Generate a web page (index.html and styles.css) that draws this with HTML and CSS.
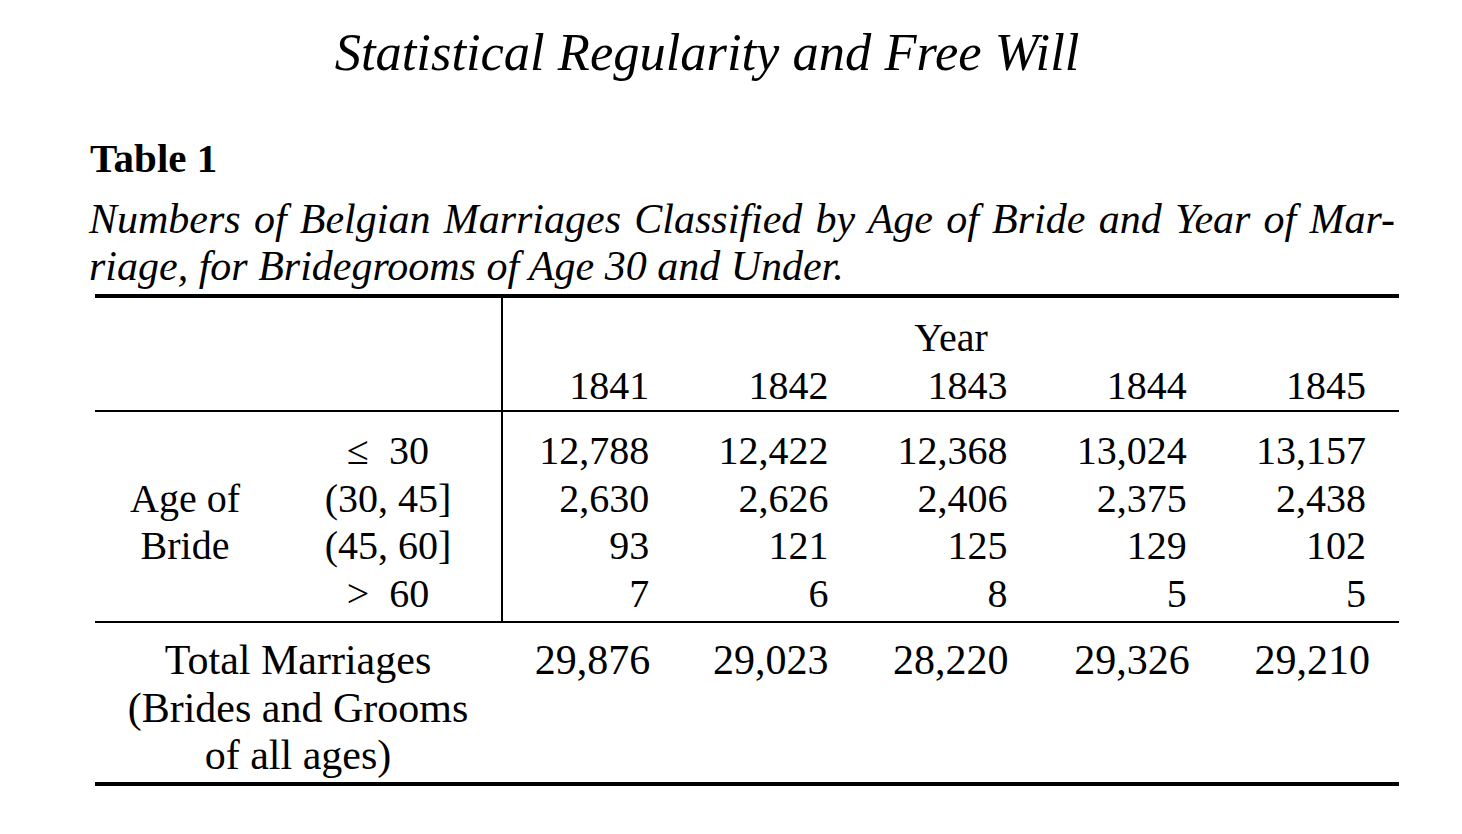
FILE: index.html
```html
<!DOCTYPE html>
<html lang="en">
<head>
<meta charset="utf-8">
<title>Statistical Regularity and Free Will</title>
<link rel="stylesheet" href="styles.css">
</head>
<body>
<div class="page">
  <h1 class="running-head">Statistical Regularity and Free Will</h1>
  <div class="content">
    <h2 class="table-label">Table 1</h2>
    <p class="caption"><span class="cap-line">Numbers of Belgian Marriages Classified by Age of Bride and Year of Mar-</span><span class="cap-last">riage, for Bridegrooms of Age 30 and Under.</span></p>
    <div class="tbl">
      <div class="sec sec-head">
        <div class="stub"></div>
        <div class="data head-data">
          <div class="year-label">Year</div>
          <div class="cols">
            <div class="num">1841</div>
            <div class="num">1842</div>
            <div class="num">1843</div>
            <div class="num">1844</div>
            <div class="num">1845</div>
          </div>
        </div>
      </div>
      <div class="sec sec-body">
        <div class="stub body-stub">
          <div class="group">Age of<br>Bride</div>
          <div class="range">&le;&nbsp; 30</div>
          <div class="range">(30, 45]</div>
          <div class="range">(45, 60]</div>
          <div class="range">&gt;&nbsp; 60</div>
        </div>
        <div class="data body-data">
          <div class="cols">
            <div class="num">12,788</div><div class="num">12,422</div><div class="num">12,368</div><div class="num">13,024</div><div class="num">13,157</div>
            <div class="num">2,630</div><div class="num">2,626</div><div class="num">2,406</div><div class="num">2,375</div><div class="num">2,438</div>
            <div class="num">93</div><div class="num">121</div><div class="num">125</div><div class="num">129</div><div class="num">102</div>
            <div class="num">7</div><div class="num">6</div><div class="num">8</div><div class="num">5</div><div class="num">5</div>
          </div>
        </div>
      </div>
      <div class="sec sec-total">
        <div class="total-label">Total Marriages<br>(Brides and Grooms<br>of all ages)</div>
        <div class="data total-data">
          <div class="cols">
            <div class="num">29,876</div>
            <div class="num">29,023</div>
            <div class="num">28,220</div>
            <div class="num">29,326</div>
            <div class="num">29,210</div>
          </div>
        </div>
      </div>
    </div>
  </div>
</div>
</body>
</html>
```

FILE: styles.css
```css
html, body {
  margin: 0;
  padding: 0;
  background: #ffffff;
}

body {
  font-family: "Liberation Serif", "Times New Roman", serif;
  color: #000000;
}

.page {
  width: 1462px;
  height: 834px;
  padding-top: 22px;
  box-sizing: border-box;
}

.running-head {
  margin: 0;
  padding-right: 48px;
  font-size: 52.5px;
  line-height: 60px;
  font-weight: normal;
  font-style: italic;
  text-align: center;
}

.content {
  margin-left: 90px;
  width: 1309px;
  margin-top: 52px;
}

.table-label {
  margin: 0;
  font-size: 41px;
  line-height: 48px;
  font-weight: bold;
}

.caption {
  margin: 14px 4px 0 -1px;
  font-size: 42px;
  line-height: 47px;
  font-style: italic;
}

.cap-line {
  display: block;
  text-align: justify;
  text-align-last: justify;
}

.cap-last {
  display: block;
}

.tbl {
  margin-top: 4px;
  margin-left: 5px;
  font-size: 40px;
  line-height: 47.5px;
}

.sec {
  display: flex;
}

.sec-head {
  border-top: 4px solid #000;
  border-bottom: 2px solid #000;
}

.sec-body {
  border-bottom: 2px solid #000;
}

.sec-total {
  border-bottom: 4px solid #000;
  padding: 14px 0 2px;
  font-size: 42px;
}

.stub {
  width: 406px;
  flex: none;
  border-right: 2px solid #000;
}

.data {
  flex: 1;
}

.head-data {
  padding: 16px 0 1px;
}

.year-label {
  text-align: center;
}

.cols {
  display: grid;
  grid-template-columns: repeat(5, 1fr);
}

.num {
  text-align: right;
  padding-right: 33px;
}

.body-stub {
  display: grid;
  grid-template-columns: 180px 226px;
  grid-template-rows: repeat(4, 47.5px);
  padding: 15px 0 4px;
}

.group {
  grid-column: 1;
  grid-row: 1 / 5;
  align-self: center;
  text-align: center;
}

.range {
  grid-column: 2;
  text-align: center;
}

.body-data {
  padding: 15px 0 4px;
}

.total-label {
  width: 406px;
  flex: none;
  text-align: center;
}

.total-data {
  padding-left: 2px;
}

.total-data .num:nth-child(1) { padding-right: 32px; }
.total-data .num:nth-child(2) { padding-right: 33px; }
.total-data .num:nth-child(3) { padding-right: 32px; }
.total-data .num:nth-child(4) { padding-right: 30px; }
.total-data .num:nth-child(5) { padding-right: 29px; }
```
